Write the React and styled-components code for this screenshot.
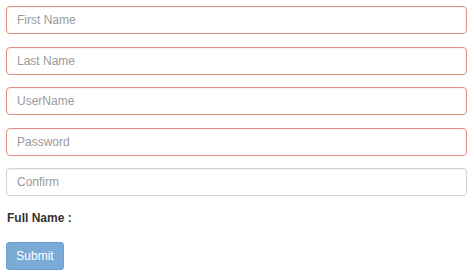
import React from 'react';
import styled, { createGlobalStyle } from 'styled-components';

const GlobalStyle = createGlobalStyle`
  body {
    margin: 0;
    background: #ffffff;
    font-family: "Liberation Sans", Arial, Helvetica, sans-serif;
  }
`;

const Form = styled.form`
  display: flex;
  flex-direction: column;
  align-items: flex-start;
  padding: 6px 7px 0 6px;
`;

const Field = styled.input`
  box-sizing: border-box;
  width: 100%;
  height: 28px;
  margin-bottom: 12.5px;
  padding: 0 10px;
  font-family: inherit;
  font-size: 12px;
  color: #555;
  background: #fff;
  border: 1px solid ${(p) => (p.$invalid ? '#e29080' : '#d2d2d2')};
  border-radius: 4px;
  box-shadow: inset 0 1px 1px rgba(0, 0, 0, 0.05);
  outline: none;

  &::placeholder {
    color: #9a9a9a;
  }
`;

const Label = styled.div`
  margin: 2px 0 0 1px;
  font-size: 12px;
  font-weight: bold;
  color: #333;
  line-height: 14px;
`;

const SubmitButton = styled.button`
  box-sizing: border-box;
  margin-top: 17.5px;
  width: 58px;
  height: 28px;
  padding: 0;
  font-family: inherit;
  font-size: 12px;
  color: #fff;
  background: #7aaad6;
  border: 1px solid #6e9ecb;
  border-radius: 3px;
  cursor: not-allowed;
`;

const fields = [
  { name: 'first', placeholder: 'First Name', invalid: true },
  { name: 'last', placeholder: 'Last Name', invalid: true },
  { name: 'user', placeholder: 'UserName', invalid: true },
  { name: 'password', placeholder: 'Password', invalid: true, type: 'password' },
  { name: 'confirm', placeholder: 'Confirm', invalid: false, type: 'password' },
];

const App = () => {
  return (
    <>
      <GlobalStyle />
      <Form onSubmit={(e) => e.preventDefault()}>
        {fields.map((f) => (
          <Field
            key={f.name}
            type={f.type || 'text'}
            placeholder={f.placeholder}
            $invalid={f.invalid}
          />
        ))}
        <Label>Full Name :</Label>
        <SubmitButton type="submit">Submit</SubmitButton>
      </Form>
    </>
  );
};

export default App;
